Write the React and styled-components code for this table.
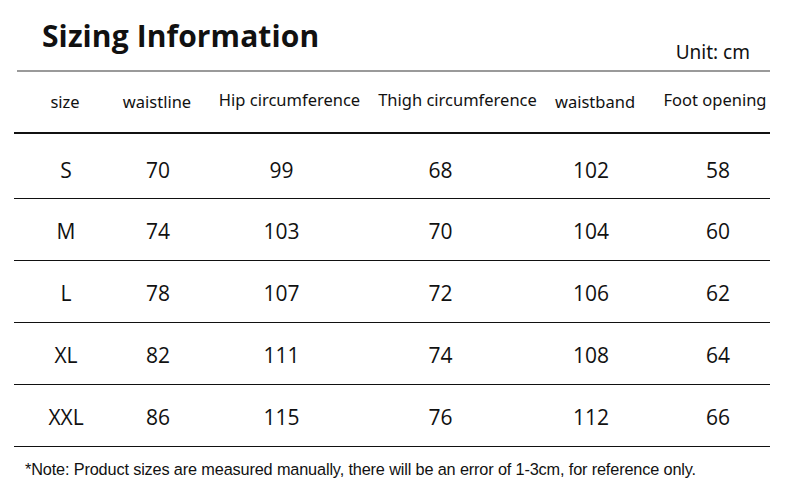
import React from 'react';
import styled, { createGlobalStyle } from 'styled-components';

const GlobalStyle = createGlobalStyle`
    html, body {
        margin: 0;
        padding: 0;
        background: #ffffff;
    }
`;

const Page = styled.div`
    width: 790px;
    height: 493px;
    background: #fff;
    color: #111;
    font-family: "Open Sans", "Noto Sans", sans-serif;
    box-sizing: border-box;
    padding-top: 18px;
    overflow: hidden;
`;

const TitleBar = styled.div`
    display: flex;
    justify-content: space-between;
    align-items: flex-end;
    height: 52px;
    border-bottom: 2px solid #9a9a9a;
    margin: 0 20px 0 17px;
    padding: 0 20px 0 25px;
`;

const Title = styled.h1`
    margin: 0;
    align-self: flex-start;
    font-family: "Open Sans", sans-serif;
    font-weight: 700;
    font-size: 30px;
    letter-spacing: 0.1px;
    color: #111;
    line-height: 36px;
`;

const Unit = styled.span`
    font-family: "Noto Sans", sans-serif;
    font-size: 19px;
    color: #111;
    line-height: 24px;
    margin-bottom: 6px;
`;

const Table = styled.div`
    margin: 0 20px 0 14px;
`;

const Row = styled.div`
    display: grid;
    grid-template-columns: 100px 88px 163px 175px 112px 118px;
    align-items: center;
    height: ${p => p.h}px;
    padding-top: ${p => p.pt || 0}px;
    padding-bottom: ${p => p.pb || 0}px;
    border-bottom: ${p => (p.header ? '2px' : '1.5px')} solid #111;
    box-sizing: border-box;
`;

const HeadCell = styled.div`
    text-align: center;
    font-family: "Noto Sans", sans-serif;
    font-size: 16.5px;
    color: #111;
    padding-top: ${p => (p.low ? 3 : 0)}px;
    white-space: nowrap;
    transform: translateX(${p => p.shift || 0}px);
`;

const Cell = styled.div`
    text-align: center;
    font-family: "Open Sans", sans-serif;
    font-size: 21px;
    color: #111;
    transform: translateX(${p => p.shift || 0}px);
`;

const Note = styled.p`
    margin: 13px 0 0 25px;
    font-family: "Liberation Sans", Arial, sans-serif;
    font-size: 16.3px;
    color: #111;
    letter-spacing: -0.15px;
`;

const headers = [
    { label: 'size', low: true, shift: 1 },
    { label: 'waistline', low: true, shift: -1 },
    { label: 'Hip circumference', shift: 6 },
    { label: 'Thigh circumference', shift: 5 },
    { label: 'waistband', low: true, shift: -1 },
    { label: 'Foot opening', shift: 4 },
];

const dataShift = [2, 0, -2, -12, -5, 7];

const rows = [
    ['S', 70, 99, 68, 102, 58],
    ['M', 74, 103, 70, 104, 60],
    ['L', 78, 107, 72, 106, 62],
    ['XL', 82, 111, 74, 108, 64],
    ['XXL', 86, 115, 76, 112, 66],
];

const App = () => (
    <>
        <GlobalStyle />
        <Page>
            <TitleBar>
                <Title>Sizing Information</Title>
                <Unit>Unit: cm</Unit>
            </TitleBar>
            <Table>
                <Row header h={62} pb={5}>
                    {headers.map(h => (
                        <HeadCell key={h.label} low={h.low} shift={h.shift}>{h.label}</HeadCell>
                    ))}
                </Row>
                {rows.map((r, i) => (
                    <Row key={r[0]} h={i === 0 ? 65 : 62} pt={i === 0 ? 8 : 2}>
                        {r.map((v, j) => (
                            <Cell key={j} shift={dataShift[j]}>{v}</Cell>
                        ))}
                    </Row>
                ))}
            </Table>
            <Note>*Note: Product sizes are measured manually, there will be an error of 1-3cm, for reference only.</Note>
        </Page>
    </>
);

export default App;
